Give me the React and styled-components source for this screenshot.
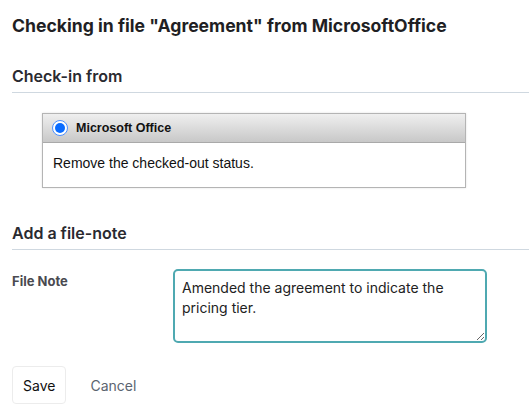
import React from "react";
import styled, { createGlobalStyle } from "styled-components";

const Global = createGlobalStyle`
  html, body { margin: 0; padding: 0; background: #fff; }
  body { font-family: Inter, "Noto Sans", sans-serif; color: #222; }
`;

const Page = styled.div`
  padding: 12px 0 0 12px;
  width: 517px;
`;

const Title = styled.h1`
  margin: 0;
  font-size: 17.6px;
  font-weight: 700;
  line-height: 28px;
  color: #1f1f24;
`;

const SectionHeading = styled.h2`
  margin: ${(p) => p.$top}px 0 0 0;
  padding-bottom: 5px;
  font-size: 16px;
  font-weight: 600;
  line-height: 22px;
  color: #2a2a30;
  border-bottom: 1px solid #cfd8e0;
`;

const OptionBox = styled.div`
  margin: 20px 0 0 30px;
  width: 422px;
  border: 1px solid #b4b4b4;
  box-shadow: 0 0 2px rgba(0, 0, 0, 0.12);
  font-family: "Liberation Sans", Arial, sans-serif;
`;

const OptionHeader = styled.label`
  display: flex;
  align-items: center;
  gap: 8px;
  height: 28px;
  padding: 0 9px;
  background: linear-gradient(#efefef, #c8c8c8);
  border-bottom: 1px solid #a9a9a9;
  font-size: 12.5px;
  font-weight: 700;
  color: #111;
`;

const Radio = styled.span`
  width: 14px;
  height: 14px;
  border-radius: 50%;
  background: #fff;
  border: 1px solid #4d90fe;
  display: flex;
  align-items: center;
  justify-content: center;
  &::after {
    content: "";
    width: 10px;
    height: 10px;
    border-radius: 50%;
    background: #0a6cff;
  }
`;

const OptionBody = styled.div`
  padding: 12px 10px 16px 10px;
  font-size: 14px;
  line-height: 16px;
  color: #111;
`;

const FieldRow = styled.div`
  display: grid;
  grid-template-columns: 161px 314px;
  margin-top: 19px;
`;

const FieldLabel = styled.div`
  font-size: 13px;
  font-weight: 700;
  color: #4a4a50;
  padding-top: 4px;
`;

const NoteArea = styled.textarea`
  box-sizing: border-box;
  width: 314px;
  height: 74px;
  border: 2px solid #4fa9b1;
  border-radius: 5px;
  padding: 7px 7px 5px;
  font-family: Inter, "Noto Sans", sans-serif;
  font-size: 14px;
  line-height: 20px;
  color: #222;
  outline: none;
  resize: vertical;
`;

const Actions = styled.div`
  display: flex;
  align-items: center;
  gap: 12px;
  margin-top: 23px;
`;

const Button = styled.button`
  font-family: Inter, "Noto Sans", sans-serif;
  font-size: 14px;
  height: 38px;
  padding: 0 ${(p) => (p.$plain ? "11px" : "10px")};
  border-radius: 4px;
  border: 1px solid ${(p) => (p.$plain ? "transparent" : "#ececec")};
  background: #fff;
  color: ${(p) => (p.$plain ? "#5b6470" : "#111")};
  cursor: pointer;
`;

export default function App() {
  return (
    <>
      <Global />
      <Page>
        <Title>Checking in file "Agreement" from MicrosoftOffice</Title>
        <SectionHeading $top={25}>Check-in from</SectionHeading>
        <OptionBox>
          <OptionHeader>
            <Radio />
            Microsoft Office
          </OptionHeader>
          <OptionBody>Remove the checked-out status.</OptionBody>
        </OptionBox>
        <SectionHeading $top={34}>Add a file-note</SectionHeading>
        <FieldRow>
          <FieldLabel>File Note</FieldLabel>
          <NoteArea defaultValue="Amended the agreement to indicate the pricing tier." />
        </FieldRow>
        <Actions>
          <Button>Save</Button>
          <Button $plain>Cancel</Button>
        </Actions>
      </Page>
    </>
  );
}
